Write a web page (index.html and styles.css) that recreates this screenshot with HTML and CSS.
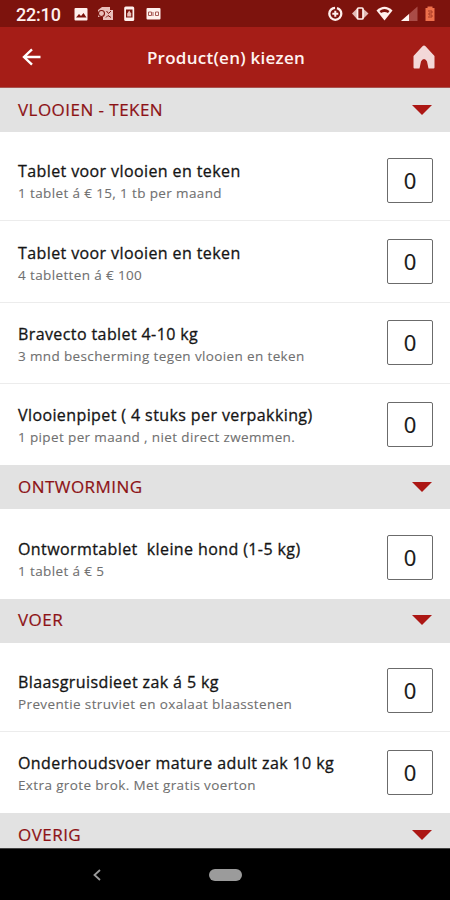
FILE: index.html
```html
<!DOCTYPE html>
<html lang="nl">
<head>
<meta charset="utf-8">
<title>Product(en) kiezen</title>
<link rel="stylesheet" href="styles.css">
</head>
<body>
<div class="app">
  <div class="status">
    <span class="clock">22:10</span>
    <svg class="notifications" viewBox="72 0 92 27">
      <rect x="74.500" y="8" width="13" height="12.500" rx="1" fill="#fff0ed"/>
      <path d="M76 17.500l3-3.500 2 2 2.500-3 3 4.500z" fill="#7d130d"/>
      <path d="M102 7h8v3h3v10h-10v-3h-5v-7z" fill="#e9bfba"/>
      <circle cx="101.500" cy="13.500" r="3" fill="none" stroke="#7d130d" stroke-width="1.100"/>
      <path d="M106.500 11l2 2.500 2.500-2.500m-5 6.500l2-2 3 2" fill="none" stroke="#7d130d"/>
      <rect x="124.200" y="6.500" width="10" height="14.500" rx="1.500" fill="#fff0ed"/>
      <path d="M126 9.500h6.500v8H126z" fill="#7d130d"/>
      <path d="M129.200 10.500l2 3v3h-4v-3z" fill="#e9bfba"/>
      <rect x="146.500" y="8" width="14" height="11.500" rx="1" fill="#fff0ed"/>
      <path d="M148.500 12h3v3.500h-3zm7 0h3v3.500h-3zm-2.500 0v4" fill="none" stroke="#a65b56" stroke-width="1"/>
    </svg>
    <svg class="indicators" viewBox="325 0 115 27">
      <circle cx="335.300" cy="13.800" r="6" fill="none" stroke="#fff0ed" stroke-width="2.300" stroke-dasharray="35.700 2" stroke-dashoffset="8.400"/>
      <path d="M335.300 10.800v6m-3-3h6" stroke="#fff0ed" stroke-width="2"/>
      <path d="M352 13.500l5-5h6l5.500 5-5.500 5.500h-6z" fill="#e3bab6"/>
      <rect x="357.500" y="8" width="5.500" height="11" rx="1" fill="#7d130d" stroke="#fff0ed" stroke-width="1.700"/>
      <path d="M376.500 10.500q8-7.500 16 0L384.500 20.500z" fill="#fff0ed"/>
      <path d="M379.500 11q5-4 10 0l-1.500 2q-3.500-2-7 0z" fill="#7d130d"/>
      <path d="M401 21l16.500-14.500V21z" fill="#a94c47"/>
      <path d="M401 21l8-7v7z" fill="#fff5f3"/>
      <path d="M427.500 6.500h5V8h2v13h-9V8h2z" fill="#ee704c"/>
      <path d="M428 11h4v2h-3v2h3v2h-4" fill="none" stroke="#a93a25"/>
    </svg>
  </div>
  <header class="bar">
    <svg class="back" viewBox="0 0 20 20"><path d="M18.500 10H2m8-7.700L2 10l8 7.700" fill="none" stroke="#fff" stroke-width="2.400"/></svg>
    <h1 class="heading">Product(en) kiezen</h1>
    <svg class="home" viewBox="0 0 22 24"><path d="M11 .5q.8 0 1.500.8L21.500 11v11.500q0 1-1 1H15.500L14 16.500q-1-2.500-3-2.500t-3 2.500L6.500 23.500h-5q-1 0-1-1V11l9-9.700Q10.200.5 11 .5z" fill="#f3d8d8"/></svg>
  </header>
  <main class="content">
    <h2 class="section">VLOOIEN - TEKEN<i class="arrow"></i></h2>
    <ul class="list">
      <li class="item"><div><p class="name">Tablet voor vlooien en teken</p><p class="note">1 tablet á € 15, 1 tb per maand</p></div><span class="count">0</span></li>
      <li class="item"><div><p class="name">Tablet voor vlooien en teken</p><p class="note">4 tabletten á € 100</p></div><span class="count">0</span></li>
      <li class="item"><div><p class="name">Bravecto tablet 4-10 kg</p><p class="note">3 mnd bescherming tegen vlooien en teken</p></div><span class="count">0</span></li>
      <li class="item"><div><p class="name">Vlooienpipet ( 4 stuks per verpakking)</p><p class="note">1 pipet per maand , niet direct zwemmen.</p></div><span class="count">0</span></li>
    </ul>
    <h2 class="section">ONTWORMING<i class="arrow"></i></h2>
    <ul class="list">
      <li class="item"><div><p class="name">Ontwormtablet  kleine hond (1-5 kg)</p><p class="note">1 tablet á € 5</p></div><span class="count">0</span></li>
    </ul>
    <h2 class="section">VOER<i class="arrow"></i></h2>
    <ul class="list">
      <li class="item"><div><p class="name">Blaasgruisdieet zak á 5 kg</p><p class="note">Preventie struviet en oxalaat blaasstenen</p></div><span class="count">0</span></li>
      <li class="item"><div><p class="name">Onderhoudsvoer mature adult zak 10 kg</p><p class="note">Extra grote brok. Met gratis voerton</p></div><span class="count">0</span></li>
    </ul>
    <h2 class="section">OVERIG<i class="arrow"></i></h2>
  </main>
  <nav class="nav">
    <svg class="nav-back" viewBox="0 0 10 12"><path d="M8 1L2.500 6 8 11" fill="none" stroke="#9b9b9b" stroke-width="1.800"/></svg>
    <span class="pill"></span>
    <span></span>
  </nav>
</div>
</body>
</html>
```
FILE: styles.css
```css
* { box-sizing: border-box; }
body, h1, h2, p, ul { margin: 0; padding: 0; }
body { font-family: "Open Sans", "Noto Sans", sans-serif; background: #fff; }
.app { width: 450px; height: 900px; display: flex; flex-direction: column; overflow: hidden; }
.status { height: 27px; flex: none; background: #7d130d; display: flex; align-items: center; padding: 0 10px 0 16px; }
.clock { font: 500 18px/27px Roboto, sans-serif; color: #fff0ed; width: 56px; padding-top: 1px; letter-spacing: -0.2px; }
.notifications { width: 92px; height: 27px; }
.indicators { width: 115px; height: 27px; margin-left: auto; }
.bar { height: 61px; flex: none; background: #a51d17; border-bottom: 1px solid #a85450; display: grid; grid-template-columns: 22px 1fr 22px; align-items: center; padding: 0 15px 0 21px; }
.back { width: 20px; height: 20px; margin-left: 1px; }
.heading { font-size: 17px; font-weight: 600; line-height: 24px; letter-spacing: 0.26px; color: #fff3f1; text-align: center; padding-top: 1px; margin-right: 4px; white-space: nowrap; }
.home { width: 22px; height: 24px; }
.content { flex: 1; min-height: 0; overflow: hidden; }
.section { height: 44.200px; background: #e2e2e2; display: flex; align-items: center; justify-content: space-between; padding: 0 18px 1px 18px; color: #8d1216; font-size: 17px; font-weight: 400; line-height: 24px; letter-spacing: 0.46px; -webkit-text-stroke: 0.2px; }
.arrow { border: 10.500px solid transparent; border-top: 10.500px solid #ac1714; border-bottom: 0; }
.list { list-style: none; padding-top: 8px; }
.item { height: 81.250px; display: flex; align-items: center; justify-content: space-between; padding: 0 17px 0 18px; border-bottom: 1px solid #ececec; }
.item:last-child { border-bottom-color: transparent; }
.name { font-size: 16px; line-height: 22px; letter-spacing: 0.4px; -webkit-text-stroke: 0.3px; color: #151515; white-space: pre; padding-top: 2px; }
.note { font-size: 13.500px; line-height: 18px; letter-spacing: 0.37px; -webkit-text-stroke: 0.1px; color: #707070; white-space: pre; padding-top: 2px; }
.count { width: 46px; height: 45px; border: 1px solid #6b6b6b; border-radius: 2px; display: flex; align-items: center; justify-content: center; font-size: 22px; line-height: 30px; padding-bottom: 1px; color: #181818; -webkit-text-stroke: 0.2px; }
.nav { height: 52px; flex: none; background: #000; border-top: 1px solid #444; display: grid; grid-template-columns: 1fr 33px 1fr; align-items: center; }
.nav-back { width: 10px; height: 12px; margin-left: 92px; }
.pill { height: 12px; background: #9b9b9b; border-radius: 6px; }
```
